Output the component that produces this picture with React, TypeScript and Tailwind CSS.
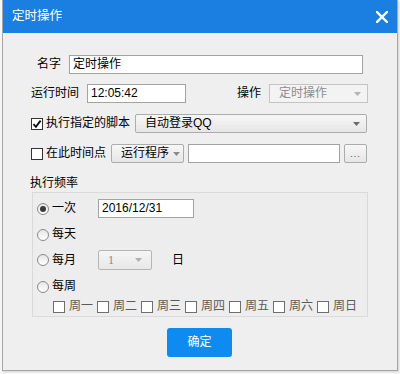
import React from "react";

const Arrow = ({ color = "#6b6b6b" }: { color?: string }) => (
  <svg width="7" height="4" viewBox="0 0 7 4" className="shrink-0">
    <path d="M0 0h7L3.5 4z" fill={color} />
  </svg>
);

const Check = ({ checked = false, muted = false }: { checked?: boolean; muted?: boolean }) => (
  <span
    className={`flex h-[12px] w-[12px] shrink-0 items-center justify-center border bg-white ${
      muted ? "border-[#6e6e6e]" : "border-[#333333]"
    }`}
  >
    {checked && (
      <svg width="10" height="10" viewBox="0 0 10 10">
        <path d="M1.5 5.2 L3.9 7.8 L8.6 1.6" fill="none" stroke="#111" strokeWidth="1.9" />
      </svg>
    )}
  </span>
);

const Radio = ({ selected = false }: { selected?: boolean }) => (
  <span className="flex h-[12px] w-[12px] shrink-0 items-center justify-center rounded-full border border-[#8a8a8a] bg-gradient-to-b from-[#e6e6e6] to-white">
    {selected && <span className="h-[6px] w-[6px] rounded-full bg-[#3a3a3a]" />}
  </span>
);

const Field = ({ value, width }: { value: string; width: string }) => (
  <div className={`flex h-[19px] ${width} items-center border border-[#a3a3a3] bg-white pl-[3px] text-black`}>
    {value}
  </div>
);

const weekdays = ["周一", "周二", "周三", "周四", "周五", "周六", "周日"];

export default function App() {
  return (
    <div className="h-[374px] w-[400px] overflow-hidden bg-[#f6f6f6] font-['Liberation_Sans','Noto_Sans_CJK_SC',sans-serif] text-[12px] leading-[19px] text-black">
      <div className="ml-[2px] flex h-[371px] w-[396px] flex-col border border-t-0 border-[#a6a6a6] bg-[#efefef] shadow-[1px_1px_2px_rgba(0,0,0,0.15)]">
        {/* title bar */}
        <div className="flex h-[33px] shrink-0 items-center justify-between bg-[#1a7fe0] pl-[9px] pr-[9px] text-[12.5px] text-white">
          <span>定时操作</span>
          <svg width="12" height="12" viewBox="0 0 12 12">
            <path d="M1 1 L11 11 M11 1 L1 11" stroke="#fff" strokeWidth="2.4" strokeLinecap="square" />
          </svg>
        </div>

        {/* 名字 */}
        <div className="mt-[22px] flex h-[19px] items-center">
          <span className="ml-[34px] w-[32px]">名字</span>
          <Field value="定时操作" width="w-[294px]" />
        </div>

        {/* 运行时间 / 操作 */}
        <div className="mt-[10px] flex h-[19px] items-center">
          <span className="ml-[28px] w-[56px]">运行时间</span>
          <Field value="12:05:42" width="w-[99px]" />
          <span className="ml-[51px] w-[32px]">操作</span>
          <div className="flex h-[19px] w-[99px] items-center justify-between border border-[#c4c4c4] bg-[#f3f3f3] pl-[9px] pr-[6px] text-[#8c8c8c]">
            <span>定时操作</span>
            <Arrow color="#b3b3b3" />
          </div>
        </div>

        {/* 执行指定的脚本 */}
        <div className="mt-[11px] flex h-[19px] items-center">
          <span className="ml-[28px]">
            <Check checked />
          </span>
          <span className="ml-[3px] w-[89px]">执行指定的脚本</span>
          <div className="flex h-[19px] w-[232px] items-center justify-between rounded-[2px] border border-[#acacac] bg-gradient-to-b from-[#f7f7f7] to-[#e6e6e6] pl-[9px] pr-[6px]">
            <span>自动登录QQ</span>
            <Arrow />
          </div>
        </div>

        {/* 在此时间点 */}
        <div className="mt-[11px] flex h-[19px] items-center">
          <span className="ml-[28px]">
            <Check />
          </span>
          <span className="ml-[3px] w-[65px]">在此时间点</span>
          <div className="flex h-[19px] w-[73px] items-center gap-[4px] rounded-[2px] border border-[#acacac] bg-gradient-to-b from-[#f7f7f7] to-[#e6e6e6] pl-[9px]">
            <span>运行程序</span>
            <Arrow color="#8a8a8a" />
          </div>
          <div className="ml-[4px] h-[19px] w-[152px] border border-[#a3a3a3] bg-white" />
          <div className="ml-[4px] flex h-[19px] w-[23px] items-end justify-center rounded-[2px] border border-[#acacac] bg-gradient-to-b from-[#f7f7f7] to-[#e6e6e6] pb-[3px] text-[9px] leading-[9px] tracking-[1px] text-[#444]">
            ...
          </div>
        </div>

        {/* 执行频率 */}
        <div className="mt-[11px] h-[18px] pl-[27px] leading-[18px]">执行频率</div>

        {/* group box */}
        <div className="ml-[29px] flex h-[125px] w-[336px] flex-col border border-[#dadada] bg-[#ededed]">
          <div className="mt-[6px] flex h-[19px] items-center">
            <span className="ml-[4px]">
              <Radio selected />
            </span>
            <span className="ml-[3px] w-[46px]">一次</span>
            <Field value="2016/12/31" width="w-[96px]" />
          </div>

          <div className="mt-[7px] flex h-[19px] items-center">
            <span className="ml-[4px]">
              <Radio />
            </span>
            <span className="ml-[3px]">每天</span>
          </div>

          <div className="mt-[6px] flex h-[20px] items-center">
            <span className="ml-[4px]">
              <Radio />
            </span>
            <span className="ml-[3px] w-[46px]">每月</span>
            <div className="flex h-[20px] w-[54px] items-center justify-between rounded-[2px] border border-[#b5b5b5] bg-gradient-to-b from-[#f5f5f5] to-[#e8e8e8] pl-[9px] pr-[9px] font-['Liberation_Serif',serif] text-[#8a8a8a]">
              <span>1</span>
              <Arrow color="#b0b0b0" />
            </div>
            <span className="ml-[20px]">日</span>
          </div>

          <div className="mt-[7px] flex h-[19px] items-center">
            <span className="ml-[4px]">
              <Radio />
            </span>
            <span className="ml-[3px]">每周</span>
          </div>

          <div className="mt-[1px] flex h-[19px] items-center pl-[20px]">
            {weekdays.map((d) => (
              <div key={d} className="flex w-[44px] items-center">
                <Check muted />
                <span className="ml-[4px] text-[#5a5a5a]">{d}</span>
              </div>
            ))}
          </div>
        </div>

        {/* confirm */}
        <div className="mt-[11px] flex">
          <button className="ml-[164px] flex h-[29px] w-[65px] items-center justify-center rounded-[3px] bg-[#0d8bf0] text-white">
            确定
          </button>
        </div>
      </div>
    </div>
  );
}
